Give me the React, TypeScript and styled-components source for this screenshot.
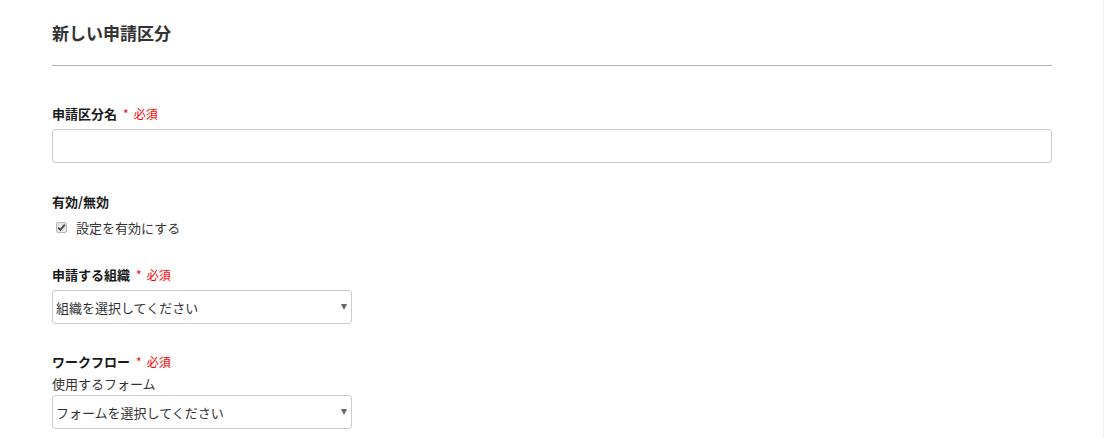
import React from "react";
import styled, { createGlobalStyle } from "styled-components";

const Global = createGlobalStyle`
  html, body { margin: 0; padding: 0; background: #fff; }
  body { font-family: "Noto Sans CJK JP", "Noto Sans", sans-serif; color: #333; }
`;

const Page = styled.div`
  width: 1104px;
  min-height: 438px;
  border-right: 1px solid #f0f0f0;
  padding: 21px 0 0 52px;
  box-sizing: border-box;
`;

const Container = styled.div`
  width: 1000px;
  display: flex;
  flex-direction: column;
`;

const Title = styled.h2`
  margin: 0;
  font-size: 17px;
  line-height: 24px;
  font-weight: 700;
  color: #333;
`;

const Rule = styled.hr`
  margin: 20px 0 0;
  border: 0;
  border-top: 1px solid #b5b5b5;
  height: 0;
`;

const Field = styled.div<{ $top: number }>`
  display: flex;
  flex-direction: column;
  margin-top: ${(p) => p.$top}px;
`;

const Label = styled.div`
  font-size: 13px;
  line-height: 18px;
  font-weight: 700;
  color: #1a1a1a;
  display: flex;
  align-items: center;
  gap: 6px;
`;

const Required = styled.span`
  color: #f00;
  font-size: 12px;
  font-weight: 400;
  display: flex;
  gap: 5px;
`;

const SubLabel = styled.div`
  font-size: 13px;
  line-height: 18px;
  color: #333;
  margin-top: 4px;
`;

const TextInput = styled.input`
  margin-top: 6px;
  width: 1000px;
  height: 34px;
  box-sizing: border-box;
  border: 1px solid #ccc;
  border-radius: 3px;
  font: inherit;
  font-size: 13px;
  padding: 0 6px;
  outline: none;
`;

const SelectWrap = styled.div<{ $top: number }>`
  position: relative;
  width: 300px;
  height: 34px;
  margin-top: ${(p) => p.$top}px;
`;

const Select = styled.select`
  appearance: none;
  -webkit-appearance: none;
  width: 100%;
  height: 100%;
  box-sizing: border-box;
  border: 1px solid #ccc;
  border-radius: 3px;
  background: #fff;
  font-family: "Noto Sans CJK JP", "Noto Sans", sans-serif;
  font-size: 13px;
  color: #333;
  padding: 0 0 0 3px;
  outline: none;
`;

const Arrow = styled.span`
  position: absolute;
  right: 5px;
  top: 14px;
  width: 0;
  height: 0;
  border-left: 3.5px solid transparent;
  border-right: 3.5px solid transparent;
  border-top: 6px solid #666;
  pointer-events: none;
`;

const CheckRow = styled.label`
  display: flex;
  align-items: center;
  height: 20px;
  margin-top: 6px;
  padding-left: 4px;
  gap: 9px;
  font-size: 13px;
  color: #333;
`;

const Box = styled.span`
  width: 11px;
  height: 11px;
  box-sizing: border-box;
  border: 1px solid #b8b8b8;
  border-radius: 2px;
  background: #e6e6e6;
  display: flex;
  align-items: center;
  justify-content: center;
`;

const Req = () => (
  <Required>
    <span>*</span>
    <span>必須</span>
  </Required>
);

export default function App() {
  return (
    <>
      <Global />
      <Page>
        <Container>
          <Title>新しい申請区分</Title>
          <Rule />
          <Field $top={39}>
            <Label>
              申請区分名 <Req />
            </Label>
            <TextInput />
          </Field>
          <Field $top={30}>
            <Label>有効/無効</Label>
            <CheckRow>
              <Box>
                <svg width="9" height="9" viewBox="0 0 9 9">
                  <path d="M1.2 4.6 L3.4 6.8 L7.8 1.6" fill="none" stroke="#4a4a4a" strokeWidth="1.8" />
                </svg>
              </Box>
              設定を有効にする
            </CheckRow>
          </Field>
          <Field $top={29}>
            <Label>
              申請する組織 <Req />
            </Label>
            <SelectWrap $top={6}>
              <Select defaultValue="">
                <option value="">組織を選択してください</option>
              </Select>
              <Arrow />
            </SelectWrap>
          </Field>
          <Field $top={29}>
            <Label>
              ワークフロー <Req />
            </Label>
            <SubLabel>使用するフォーム</SubLabel>
            <SelectWrap $top={2}>
              <Select defaultValue="">
                <option value="">フォームを選択してください</option>
              </Select>
              <Arrow />
            </SelectWrap>
          </Field>
        </Container>
      </Page>
    </>
  );
}
